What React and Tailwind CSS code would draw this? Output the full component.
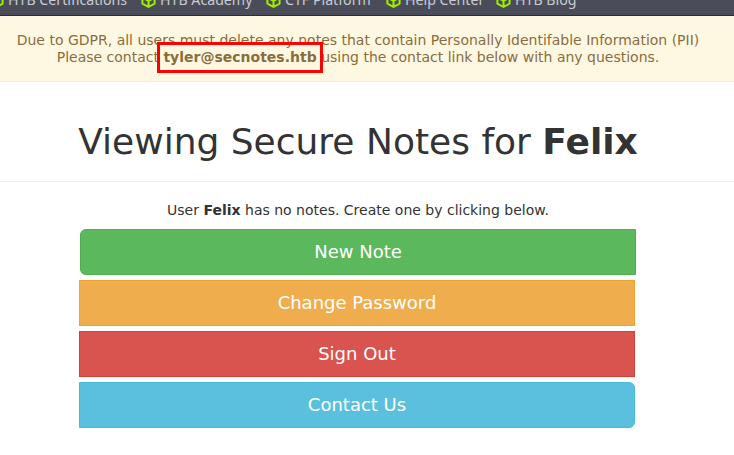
const bookmarks = [
  { label: 'HTB Certifications', width: 'w-[152px]' },
  { label: 'HTB Academy', width: 'w-[125px]' },
  { label: 'CTF Platform', width: 'w-[120px]' },
  { label: 'Help Center', width: 'w-[110px]' },
  { label: 'HTB Blog', width: 'w-[100px]' },
];

const actions = [
  { label: 'New Note', style: 'bg-[#5cb85c] border-[#4cae4c] rounded-l-md translate-x-px' },
  { label: 'Change Password', style: 'bg-[#f0ad4e] border-[#eea236]' },
  { label: 'Sign Out', style: 'bg-[#d9534f] border-[#d43f3a]' },
  { label: 'Contact Us', style: 'bg-[#5bc0de] border-[#46b8da] rounded-r-md' },
];

function Cube() {
  return (
    <svg className="h-4 w-[15px] shrink-0" viewBox="0 0 15 16" fill="none" stroke="#9fef00" strokeWidth="2" strokeLinejoin="round">
      <path d="M7.5 1.2 13.6 4.6V11.6L7.5 15 1.4 11.6V4.6ZM4 7 7.5 9 11 7M7.5 9V15" />
    </svg>
  );
}

export default function App() {
  return (
    <div className="h-[455px] w-[734px] overflow-hidden bg-white font-['DejaVu_Sans',sans-serif] text-sm text-[#333]">
      <nav className="flex h-4 items-end overflow-hidden border-b border-[#2b2d38] bg-[#4a4d59] font-['Noto_Sans',sans-serif] text-[14.2px] text-[#c9cbd2]">
        <div className="-ml-[11px] flex h-[23px] shrink-0 items-start">
          {bookmarks.map((b) => (
            <div key={b.label} className={`flex shrink-0 items-start gap-1 ${b.width}`}>
              <Cube />
              <span className="-mt-0.5 whitespace-nowrap leading-5">{b.label}</span>
            </div>
          ))}
        </div>
      </nav>
      <div className="h-[66px] border-b border-[#f5ecce] bg-[#fef8e3] pr-[18px] pt-4 text-center leading-[17px] text-[#8a6d3b]">
        <p className="whitespace-nowrap">Due to GDPR, all users must delete any notes that contain Personally Identifable Information (PII)</p>
        <p className="whitespace-nowrap">
          Please contact{' '}
          <strong className="relative">
            tyler@secnotes.htb
            <span className="absolute -left-[6px] -top-[7px] h-[31px] w-[166px] border-3 border-[#ff0000]" />
          </strong>{' '}
          using the contact link below with any questions.
        </p>
      </div>
      <header className="flex h-[100px] items-center justify-center border-b border-[#eee] pr-[18px] pt-5">
        <h1 className="whitespace-nowrap text-[36px] leading-10">
          Viewing Secure Notes for <b>Felix</b>
        </h1>
      </header>
      <main className="pr-[18px] pt-[18px] text-center">
        <p className="h-[29px] leading-5">
          User <b>Felix</b> has no notes. Create one by clicking below.
        </p>
        <div className="ml-[79px] flex w-[556px] flex-col gap-[5px]">
          {actions.map((a) => (
            <button key={a.label} className={`h-[46px] border text-lg leading-6 text-white ${a.style}`}>
              {a.label}
            </button>
          ))}
        </div>
      </main>
    </div>
  );
}
